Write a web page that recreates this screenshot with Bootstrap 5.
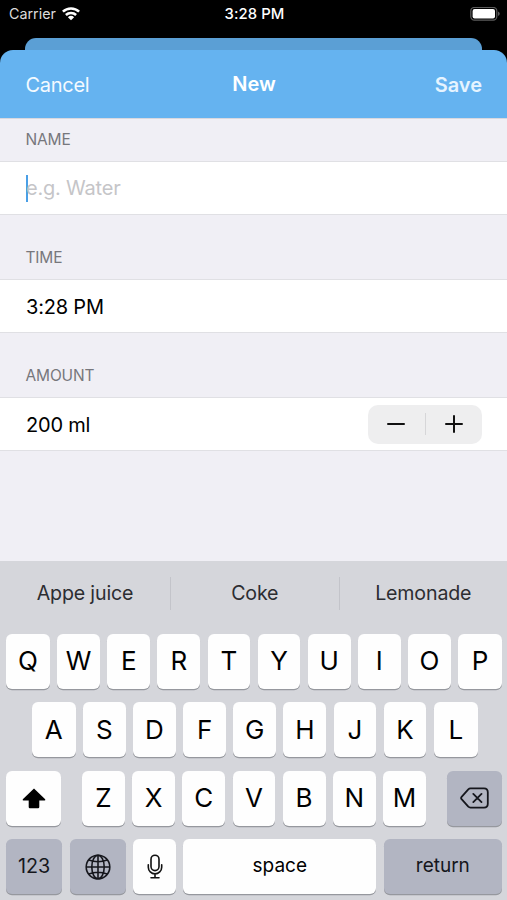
<!DOCTYPE html>
<html lang="en">
<head>
<meta charset="utf-8">
<meta name="viewport" content="width=device-width, initial-scale=1">
<title>New drink</title>
<link href="https://cdn.jsdelivr.net/npm/bootstrap@5.3.0/dist/css/bootstrap.min.css" rel="stylesheet">
<style>
body{font-family:Inter,"Liberation Sans",sans-serif;background:#000;color:#000;line-height:1;}
.phone{width:507px;height:900px;background:#000;}
.status{height:38px;color:#fff;font-size:14.3px;padding:0 7px 10px 9px;}
.status>div{flex:1 1 0;}
.carrier{color:#dcdcdc;gap:6px;}
.clock{font-weight:500;font-size:14.8px;letter-spacing:.1px;}
.back-card{height:12px;margin:0 25px;background:#5b9fd5;border-radius:11px 11px 0 0;}
.corners{background:linear-gradient(90deg,#000 25px,#5b9fd5 25px,#5b9fd5 482px,#000 482px);}
.title-bar{height:68px;background:#65b3f0;color:#fff;border-radius:13px 13px 0 0;padding:0 25px 0 26px;font-size:20px;}
.title-bar>*{flex:1 1 0;}
.title-bar .btn{color:#f4faff;font-size:inherit;line-height:1;}
.title-bar .btn-cancel{letter-spacing:-.3px;margin-left:-.5px;}
.title-bar .btn-save{color:#e6f4ff;font-weight:600;}
.form-area{background:#f0eff5;height:443px;border-top:1px solid #d8d8df;}
.section-label{color:#77777c;font-size:15.5px;padding:0 0 14px 25.5px;letter-spacing:-.15px;height:64px;}
.section-first{height:42px;}
.cell{height:54px;background:#fff;border-top:1px solid #e0e0e4;border-bottom:1px solid #e0e0e4;padding:0 25px 0 26px;font-size:20px;letter-spacing:-.2px;}
.cell span{padding-top:1px;}
.cell .caret{width:2px;height:27px;padding:0;background:#4a9fe6;margin-right:-2px;}
.cell .hint{color:#c5c5c8;padding:0 0 1px;}
.stepper{width:114px;height:39px;background:#eeeeef;border-radius:10px;}
.stepper .btn{flex:1;line-height:0;}
.stepper i{width:1px;height:22px;background:#d6d6d8;}
.keyboard{height:339px;background:#d5d6db;}
.suggest{height:64px;margin-bottom:8.5px;font-size:19.6px;letter-spacing:-.15px;color:#2c2d31;}
.suggest>div{flex:1 1 0;padding-top:1px;}
.suggest>div:first-child{flex:0 0 170px;}
.suggest i{flex:none;width:1px;height:33px;background:#c3c4ca;}
.keys{height:55px;margin-bottom:13.5px;padding:0 5px 0 6px;}
.key{display:flex;align-items:center;justify-content:center;width:42.8px;height:55px;background:#fefefe;border-radius:6px;box-shadow:0 1.3px 0 #96989e;font-size:26px;flex:none;}
.row-full>.key:first-child,.row-full>.key:last-child{width:43.9px;}
.key-dark{background:#b2b5c2;color:#15161c;}
.key.w-mod{width:55.2px;}
.key.w-low{width:56.2px;}
.key.w-space{width:193px;}
.key.w-return{width:118.3px;}
.letters{width:343.8px;}
.word{font-size:19px;padding-bottom:2px;}
.digits{font-size:19.8px;}
.row-mid{padding:0 29.3px 0 31.7px;}
svg{display:block;}
</style>
<script src="https://cdn.jsdelivr.net/npm/bootstrap@5.3.0/dist/js/bootstrap.bundle.min.js"></script>
</head>
<body>
<main class="phone d-flex flex-column overflow-hidden">
  <header class="status d-flex align-items-center">
    <div class="carrier d-flex align-items-center"><span>Carrier</span>
      <svg width="18" height="14" viewBox="0 0 18 14" fill="none" stroke="#fff" stroke-width="2.5"><path d="M.9 4.700a11.600 11.600 0 0 1 16.200 0M3.900 8a7.200 7.200 0 0 1 10.200 0"/><path fill="#fff" stroke="none" d="M9 13.200 5.900 10.200a4.500 4.500 0 0 1 6.200 0z"/></svg></div>
    <div class="clock text-center">3:28 PM</div>
    <div class="d-flex justify-content-end"><svg width="30" height="14" viewBox="0 0 30 14"><rect x=".8" y=".4" width="26" height="12.800" rx="3.600" fill="none" stroke="#5c5c5c" stroke-width="1.200"/><rect x="2.600" y="2.100" width="22.400" height="9.400" rx="2" fill="#fff"/><path d="M28 4.600q1.800.8 1.800 2.200T28 9z" fill="#5c5c5c"/></svg></div>
  </header>
  <div class="back-card"></div>
  <div class="corners">
    <nav class="title-bar d-flex align-items-center">
      <div><button class="btn btn-cancel p-0 border-0">Cancel</button></div>
      <div class="text-center fw-semibold">New</div>
      <div class="text-end"><button class="btn btn-save p-0 border-0">Save</button></div>
    </nav>
  </div>
  <section class="form-area">
    <div class="section-label section-first d-flex align-items-end">NAME</div>
    <div class="cell d-flex align-items-center"><span class="caret"></span><span class="hint">e.g. Water</span></div>
    <div class="section-label d-flex align-items-end">TIME</div>
    <div class="cell d-flex align-items-center"><span>3:28 PM</span></div>
    <div class="section-label d-flex align-items-end">AMOUNT</div>
    <div class="cell d-flex align-items-center justify-content-between"><span>200 ml</span>
      <div class="stepper d-flex align-items-center">
        <button class="btn p-0 border-0 d-flex justify-content-center" aria-label="Decrease"><svg width="18" height="18" stroke="#111" stroke-width="2" stroke-linecap="round"><path d="M1 9h16"/></svg></button><i></i>
        <button class="btn p-0 border-0 d-flex justify-content-center" aria-label="Increase"><svg width="18" height="18" stroke="#111" stroke-width="2" stroke-linecap="round"><path d="M1 9h16M9 1v16"/></svg></button>
      </div>
    </div>
  </section>
  <section class="keyboard">
    <div class="suggest d-flex align-items-center text-center"><div>Appe juice</div><i></i><div>Coke</div><i></i><div>Lemonade</div></div>
    <div class="keys row-full d-flex justify-content-between">
      <div class="key">Q</div><div class="key">W</div><div class="key">E</div><div class="key">R</div><div class="key">T</div><div class="key">Y</div><div class="key">U</div><div class="key">I</div><div class="key">O</div><div class="key">P</div>
    </div>
    <div class="keys row-full row-mid d-flex justify-content-between">
      <div class="key">A</div><div class="key">S</div><div class="key">D</div><div class="key">F</div><div class="key">G</div><div class="key">H</div><div class="key">J</div><div class="key">K</div><div class="key">L</div>
    </div>
    <div class="keys d-flex justify-content-between">
      <div class="key w-mod"><svg width="24" height="21" viewBox="0 0 24 21"><path d="M12 .5 23.200 11.200q.5 1.300-.7 1.300H17.300v6.600q0 1.200-1.200 1.200H7.900q-1.200 0-1.200-1.200v-6.600H1.500q-1.200 0-.7-1.300z"/></svg></div>
      <div class="letters d-flex justify-content-between"><div class="key">Z</div><div class="key">X</div><div class="key">C</div><div class="key">V</div><div class="key">B</div><div class="key">N</div><div class="key">M</div></div>
      <div class="key w-mod key-dark"><svg width="29" height="22" viewBox="0 0 29 22" fill="none" stroke="#15161c" stroke-width="1.800" stroke-linejoin="round" stroke-linecap="round"><path d="M10.500 1.400H24q3.800 0 3.800 3.800v11.600q0 3.800-3.800 3.800H10.500q-1.300 0-2.200-.9L1.600 12.200q-1-1.200 0-2.400L8.300 2.300q.9-.9 2.200-.9zM13.300 6.900l8.200 8.200M21.500 6.900l-8.200 8.200"/></svg></div>
    </div>
    <div class="keys d-flex justify-content-between">
      <div class="key w-low key-dark digits">123</div>
      <div class="key w-low key-dark"><svg width="26" height="26" viewBox="0 0 26 26" fill="none" stroke="#15161c" stroke-width="1.600"><circle cx="13" cy="13" r="11.800"/><ellipse cx="13" cy="13" rx="6.200" ry="11.800"/><path d="M13 1.200v23.600M1.200 13h23.600M3.800 6q9.200 3.400 18.400 0M3.800 20q9.200-3.400 18.400 0"/></svg></div>
      <div class="key"><svg width="16" height="25" viewBox="0 0 16 25" fill="none" stroke="#111" stroke-width="1.600" stroke-linecap="round"><rect x="4" y="1.200" width="8" height="15.400" rx="4"/><path d="M1.300 10.700v2.500a6.700 6.700 0 0 0 13.400 0v-2.500M8 20v3.600M4 23.700h8"/></svg></div>
      <div class="key w-space word">space</div>
      <div class="key w-return key-dark word">return</div>
    </div>
  </section>
</main>
</body>
</html>
